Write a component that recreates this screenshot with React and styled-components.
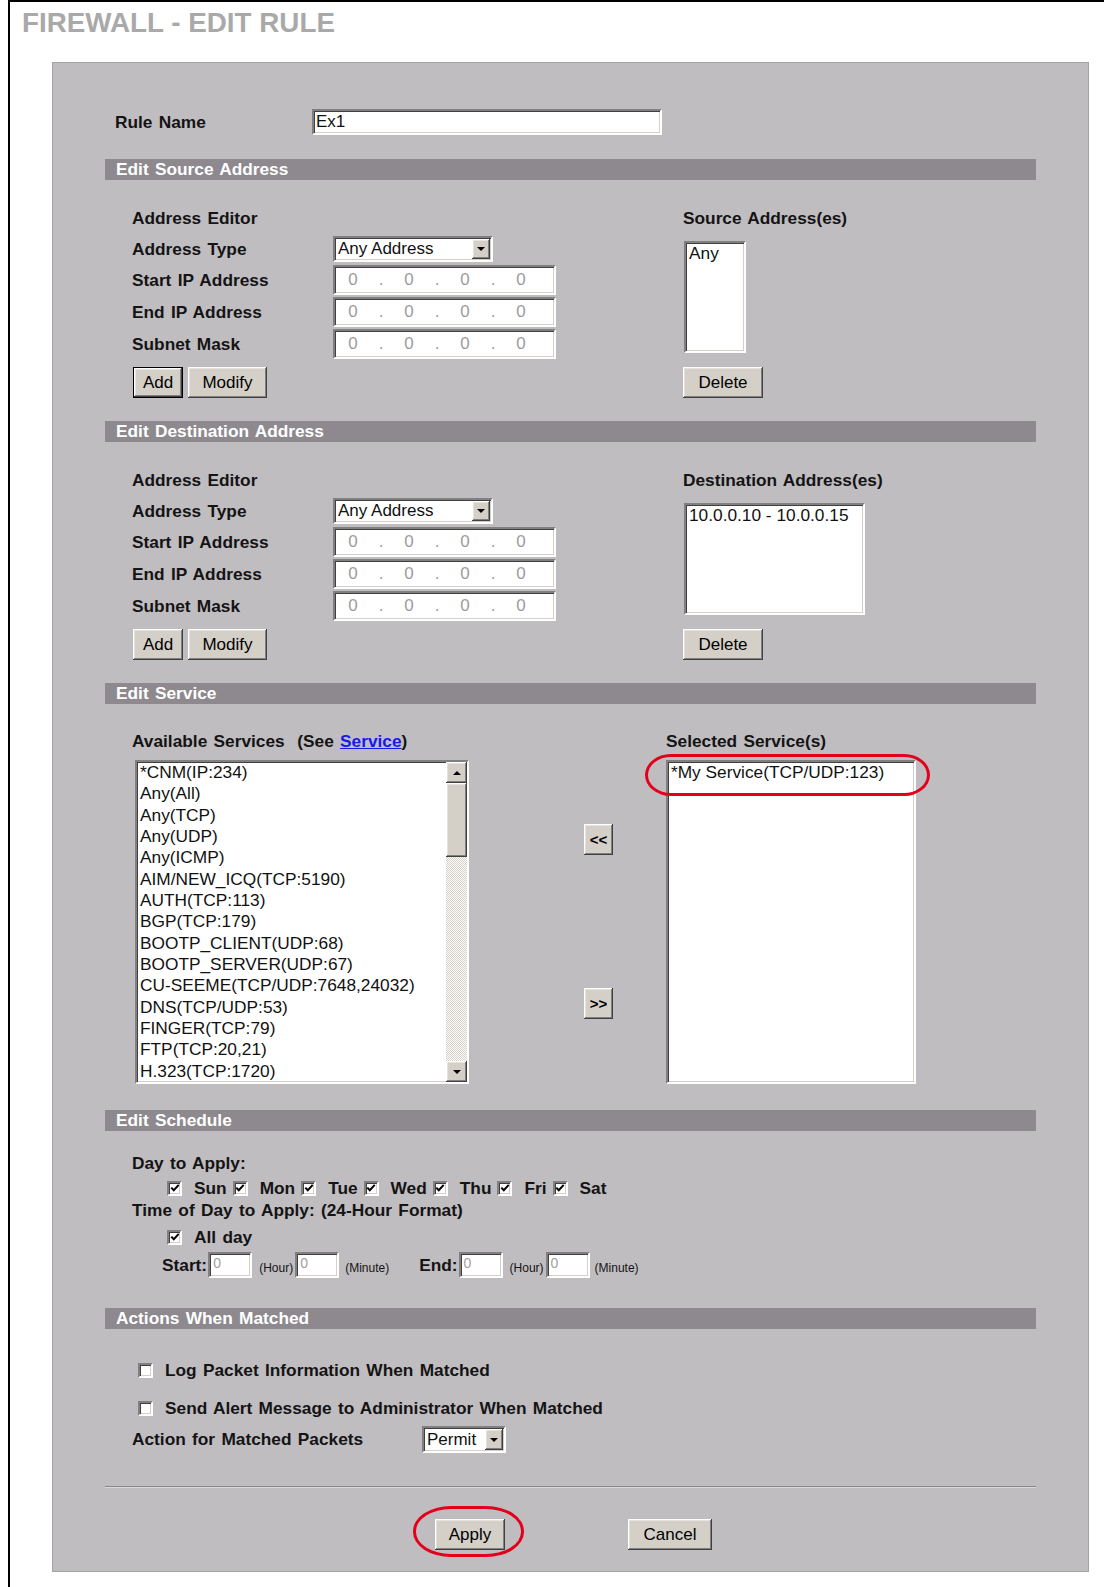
import React from "react";
import styled, { createGlobalStyle, css } from "styled-components";

const GlobalStyle = createGlobalStyle`
  html, body { margin: 0; padding: 0; background: #ffffff; }
  body { font-family: "Liberation Sans", Arial, Helvetica, sans-serif; color: #000; }
  *, *::before, *::after { box-sizing: border-box; }
`;

/* classic 3D bevels */
const sunken = css`
  background: #ffffff;
  border: 2px solid;
  border-color: #808080 #ffffff #ffffff #808080;
  box-shadow: inset 1px 1px 0 #404040, inset -1px -1px 0 #d4d0c8;
`;

const raised = css`
  background: #d4d0c8;
  border: 0;
  box-shadow:
    inset -1px -1px 0 #404040,
    inset 1px 1px 0 #ffffff,
    inset -2px -2px 0 #808080,
    inset 2px 2px 0 #e6e3de;
`;

const labelText = css`
  font-size: 17.3px;
  font-weight: bold;
  word-spacing: 1.5px;
  color: #141414;
  white-space: nowrap;
`;

const Frame = styled.div`
  margin-left: 8px;
  min-height: 1587px;
  border-left: 2px solid #000;
  border-top: 2px solid #000;
  display: flow-root;
`;

const Title = styled.h1`
  margin: 0;
  padding-left: 12px;
  height: 42px;
  line-height: 42px;
  font-size: 27.8px;
  font-weight: bold;
  color: #a9a9a9;
  white-space: nowrap;
`;

const Panel = styled.div`
  margin: 18px 0 0 42px;
  width: 1037px;
  padding: 0 52px 21px;
  background: #c0bdc1;
  border: 1px solid #a5a2a6;
  display: flow-root;
`;

const RuleRow = styled.div`
  display: flex;
  align-items: center;
  height: 26px;
  margin: 46px 0 0 10px;
`;

const RuleLabel = styled.span`
  ${labelText};
  width: 197px;
`;

const TextBox = styled.div`
  ${sunken};
  width: ${(p) => p.$w}px;
  height: ${(p) => p.$h}px;
  padding: 0 2px;
  display: flex;
  align-items: center;
  font-size: 17px;
  color: #111;
`;

const SectionBar = styled.div`
  ${labelText};
  margin-top: ${(p) => p.$top}px;
  height: 21px;
  line-height: 21px;
  padding-left: 11px;
  background: #8d898e;
  color: #ffffff;
`;

const Heading = styled.div`
  ${labelText};
  height: 22px;
  line-height: 22px;
  margin-top: ${(p) => p.$top || 0}px;
`;

const Link = styled.span`
  color: #1a1ae6;
  text-decoration: underline;
  word-spacing: 0;
`;

const EditorGrid = styled.div`
  display: flex;
  padding-left: 27px;
`;

const EditorFields = styled.div`
  width: 551px;
`;

const EditorList = styled.div`
  display: flex;
  flex-direction: column;
  align-items: flex-start;
`;

const FieldRow = styled.div`
  display: flex;
  align-items: center;
  height: ${(p) => p.$h}px;
  margin-top: ${(p) => p.$top}px;
`;

const FieldLabel = styled.span`
  ${labelText};
  width: ${(p) => p.$w || 201}px;
`;

const SelectBox = styled.div`
  ${sunken};
  display: flex;
  align-items: center;
  width: ${(p) => p.$w}px;
  height: ${(p) => p.$h}px;
  padding: 0 1px 0 3px;
  font-size: 17px;
  color: #111;
`;

const SelectText = styled.span`
  flex: 1;
  white-space: nowrap;
  overflow: hidden;
`;

const DropButton = styled.span`
  ${raised};
  flex: none;
  width: 18px;
  height: ${(p) => p.$h}px;
  display: flex;
  align-items: center;
  justify-content: center;
`;

const Tri = styled.span`
  width: 0;
  height: 0;
  border-left: 4px solid transparent;
  border-right: 4px solid transparent;
  ${(p) => (p.$up ? "border-bottom: 4px solid #000;" : "border-top: 4px solid #000;")}
`;

const IpBox = styled.div`
  ${sunken};
  width: 223px;
  height: 30px;
  display: flex;
  align-items: center;
  padding-left: 4px;
  font-size: 17px;
  color: #9c9c9c;
`;

const IpCell = styled.span`
  width: 28px;
  text-align: center;
`;

const ButtonRow = styled.div`
  display: flex;
  gap: 5px;
  margin: ${(p) => p.$top}px 0 0 1px;
`;

const Button = styled.button`
  ${raised};
  width: ${(p) => p.$w}px;
  height: 31px;
  padding: 0;
  margin-top: ${(p) => p.$top || 0}px;
  font-family: inherit;
  font-size: 17px;
  color: #000;
  ${(p) =>
    p.$focused &&
    css`
      border: 1px solid #000;
    `}
`;

const ListBox = styled.div`
  ${sunken};
  position: relative;
  display: flex;
  width: ${(p) => p.$w}px;
  height: ${(p) => p.$h}px;
  margin: ${(p) => p.$top || 0}px 0 0 ${(p) => p.$left || 0}px;
`;

const ListItems = styled.ul`
  flex: 1;
  margin: 0;
  padding: 0 0 0 3px;
  list-style: none;
  overflow: hidden;
  font-size: 17.3px;
  line-height: 21.34px;
  white-space: nowrap;
  color: #111;
`;

const ScrollBar = styled.div`
  flex: none;
  width: 21px;
  display: flex;
  flex-direction: column;
  background: repeating-conic-gradient(#ffffff 0 25%, #d4d0c8 0 50%) 0 0 / 2px 2px;
`;

const ScrollArrow = styled.div`
  ${raised};
  flex: none;
  height: 21px;
  display: flex;
  align-items: center;
  justify-content: center;
  margin-top: ${(p) => (p.$end ? "auto" : "0")};
`;

const Thumb = styled.div`
  ${raised};
  flex: none;
  height: 74px;
`;

const Ring = styled.span`
  position: absolute;
  left: ${(p) => p.$l}px;
  top: ${(p) => p.$t}px;
  width: ${(p) => p.$w}px;
  height: ${(p) => p.$h}px;
  border: 3px solid #e3001b;
  border-radius: ${(p) => p.$r};
  pointer-events: none;
`;

const ServiceArea = styled.div`
  display: flex;
  padding-left: 27px;
`;

const ServiceCol = styled.div`
  width: ${(p) => p.$w}px;
  margin-left: ${(p) => p.$left || 0}px;
`;

const MoveCol = styled.div`
  display: flex;
  flex-direction: column;
  width: 29px;
  margin-left: 115px;
`;

const MoveButton = styled(Button)`
  width: 29px;
  font-size: 15px;
  font-weight: bold;
  letter-spacing: 0;
`;

const Block = styled.div`
  padding-left: 27px;
`;

const CheckRow = styled.div`
  display: flex;
  align-items: center;
  height: 22px;
  margin-top: ${(p) => p.$top || 0}px;
  padding-left: ${(p) => p.$indent || 0}px;
`;

const DayItem = styled.span`
  display: inline-flex;
  align-items: center;
  margin-right: 6px;
`;

const Box = styled.span`
  ${sunken};
  flex: none;
  width: 15px;
  height: 15px;
  display: inline-flex;
  align-items: center;
  justify-content: center;
`;

const CheckText = styled.span`
  ${labelText};
  margin-left: 12px;
`;

const TimeRow = styled.div`
  display: flex;
  align-items: center;
  height: 26px;
  margin-top: 4px;
  padding-left: 30px;
`;

const TimeLabel = styled.span`
  ${labelText};
  margin-right: 1px;
`;

const TimeField = styled.span`
  ${sunken};
  width: 44px;
  height: 26px;
  padding: 1px 0 0 3px;
  font-size: 14px;
  line-height: 16px;
  color: #a0a0a0;
`;

const Unit = styled.span`
  font-size: 12px;
  color: #141414;
  white-space: nowrap;
  margin: 6px ${(p) => p.$r}px 0 ${(p) => p.$l}px;
`;

const Separator = styled.div`
  height: 2px;
  margin-top: 33px;
  border-top: 1px solid #8a878b;
  border-bottom: 1px solid #dad7db;
`;

const ActionBar = styled.div`
  display: flex;
  justify-content: center;
  gap: 123px;
  margin-top: 31px;
  padding-left: 6px;
`;

const Anchor = styled.span`
  position: relative;
  display: inline-flex;
`;

function Select({ w, h, children }) {
  return (
    <SelectBox $w={w} $h={h}>
      <SelectText>{children}</SelectText>
      <DropButton $h={h - 6}>
        <Tri />
      </DropButton>
    </SelectBox>
  );
}

function IpField() {
  return (
    <IpBox>
      <IpCell>0</IpCell>
      <IpCell>.</IpCell>
      <IpCell>0</IpCell>
      <IpCell>.</IpCell>
      <IpCell>0</IpCell>
      <IpCell>.</IpCell>
      <IpCell>0</IpCell>
    </IpBox>
  );
}

function CheckBox({ checked }) {
  return (
    <Box>
      {checked && (
        <svg width="10" height="10" viewBox="0 0 10 10">
          <path d="M1.3 4.6 L3.8 7.2 L8.7 1.8" stroke="#000" strokeWidth="2" fill="none" />
        </svg>
      )}
    </Box>
  );
}

function AddressEditor({ listTitle, entries, listWidth, focusAdd }) {
  return (
    <EditorGrid>
      <EditorFields>
        <Heading $top={27}>Address Editor</Heading>
        <FieldRow $top={7} $h={26}>
          <FieldLabel>Address Type</FieldLabel>
          <Select w={160} h={26}>Any Address</Select>
        </FieldRow>
        {["Start IP Address", "End IP Address", "Subnet Mask"].map((label, i) => (
          <FieldRow key={label} $top={i === 0 ? 3 : 2} $h={30}>
            <FieldLabel>{label}</FieldLabel>
            <IpField />
          </FieldRow>
        ))}
        <ButtonRow $top={8}>
          <Button $w={50} $focused={focusAdd}>Add</Button>
          <Button $w={79}>Modify</Button>
        </ButtonRow>
      </EditorFields>
      <EditorList>
        <Heading $top={27}>{listTitle}</Heading>
        <ListBox $w={listWidth} $h={112} $top={12} $left={1}>
          <ListItems>
            {entries.map((e) => (
              <li key={e}>{e}</li>
            ))}
          </ListItems>
        </ListBox>
        <Button $w={80} $top={14}>Delete</Button>
      </EditorList>
    </EditorGrid>
  );
}

const services = [
  "*CNM(IP:234)",
  "Any(All)",
  "Any(TCP)",
  "Any(UDP)",
  "Any(ICMP)",
  "AIM/NEW_ICQ(TCP:5190)",
  "AUTH(TCP:113)",
  "BGP(TCP:179)",
  "BOOTP_CLIENT(UDP:68)",
  "BOOTP_SERVER(UDP:67)",
  "CU-SEEME(TCP/UDP:7648,24032)",
  "DNS(TCP/UDP:53)",
  "FINGER(TCP:79)",
  "FTP(TCP:20,21)",
  "H.323(TCP:1720)",
];

const days = ["Sun", "Mon", "Tue", "Wed", "Thu", "Fri", "Sat"];

export default function App() {
  return (
    <>
      <GlobalStyle />
      <Frame>
        <Title>FIREWALL - EDIT RULE</Title>
        <Panel>
          <RuleRow>
            <RuleLabel>Rule Name</RuleLabel>
            <TextBox $w={350} $h={26}>Ex1</TextBox>
          </RuleRow>

          <SectionBar $top={24}>Edit Source Address</SectionBar>
          <AddressEditor listTitle="Source Address(es)" entries={["Any"]} listWidth={62} focusAdd />

          <SectionBar $top={23}>Edit Destination Address</SectionBar>
          <AddressEditor
            listTitle="Destination Address(es)"
            entries={["10.0.0.10 - 10.0.0.15"]}
            listWidth={181}
          />

          <SectionBar $top={23}>Edit Service</SectionBar>
          <ServiceArea>
            <ServiceCol $w={337}>
              <Heading $top={26}>
                Available Services&nbsp; (See <Link>Service</Link>)
              </Heading>
              <ListBox $w={334} $h={324} $top={8} $left={3}>
                <ListItems>
                  {services.map((s) => (
                    <li key={s}>{s}</li>
                  ))}
                </ListItems>
                <ScrollBar>
                  <ScrollArrow>
                    <Tri $up />
                  </ScrollArrow>
                  <Thumb />
                  <ScrollArrow $end>
                    <Tri />
                  </ScrollArrow>
                </ScrollBar>
              </ListBox>
            </ServiceCol>
            <MoveCol>
              <MoveButton $top={120}>&lt;&lt;</MoveButton>
              <MoveButton $top={133}>&gt;&gt;</MoveButton>
            </MoveCol>
            <ServiceCol $w={260} $left={53}>
              <Heading $top={26}>Selected Service(s)</Heading>
              <ListBox $w={250} $h={324} $top={8}>
                <ListItems>
                  <li>*My Service(TCP/UDP:123)</li>
                </ListItems>
                <Ring $l={-23} $t={-8} $w={285} $h={42} $r="26px / 21px" />
              </ListBox>
            </ServiceCol>
          </ServiceArea>

          <SectionBar $top={26}>Edit Schedule</SectionBar>
          <Block>
            <Heading $top={21}>Day to Apply:</Heading>
            <CheckRow $top={3} $indent={35}>
              {days.map((d) => (
                <DayItem key={d}>
                  <CheckBox checked />
                  <CheckText>{d}</CheckText>
                </DayItem>
              ))}
            </CheckRow>
            <Heading>Time of Day to Apply: (24-Hour Format)</Heading>
            <CheckRow $top={5} $indent={35}>
              <CheckBox checked />
              <CheckText>All day</CheckText>
            </CheckRow>
            <TimeRow>
              <TimeLabel>Start:</TimeLabel>
              <TimeField>0</TimeField>
              <Unit $l={7} $r={2}>(Hour)</Unit>
              <TimeField>0</TimeField>
              <Unit $l={6} $r={30}>(Minute)</Unit>
              <TimeLabel>End:</TimeLabel>
              <TimeField>0</TimeField>
              <Unit $l={7} $r={2}>(Hour)</Unit>
              <TimeField>0</TimeField>
              <Unit $l={5} $r={0}>(Minute)</Unit>
            </TimeRow>
          </Block>

          <SectionBar $top={30}>Actions When Matched</SectionBar>
          <Block>
            <CheckRow $top={30} $indent={6}>
              <CheckBox />
              <CheckText>Log Packet Information When Matched</CheckText>
            </CheckRow>
            <CheckRow $top={16} $indent={6}>
              <CheckBox />
              <CheckText>Send Alert Message to Administrator When Matched</CheckText>
            </CheckRow>
            <FieldRow $top={7} $h={27}>
              <FieldLabel $w={290}>Action for Matched Packets</FieldLabel>
              <Select w={84} h={27}>Permit</Select>
            </FieldRow>
          </Block>

          <Separator />
          <ActionBar>
            <Anchor>
              <Button $w={70}>Apply</Button>
              <Ring $l={-22} $t={-13} $w={111} $h={51} $r="38px / 25px" />
            </Anchor>
            <Button $w={84}>Cancel</Button>
          </ActionBar>
        </Panel>
      </Frame>
    </>
  );
}
